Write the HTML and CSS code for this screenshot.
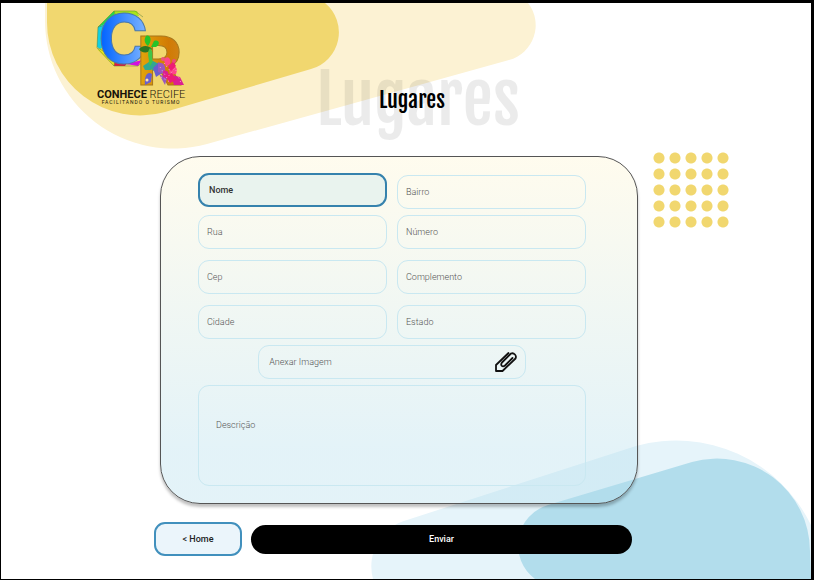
FILE: index.html
```html
<!DOCTYPE html>
<html lang="pt-BR">
<head>
<meta charset="utf-8">
<meta name="viewport" content="width=device-width, initial-scale=1">
<title>Lugares - Conhece Recife</title>
<link rel="stylesheet" href="styles.css">
</head>
<body>
<div class="page">
  <svg class="blob blob-top" width="540" height="150" viewBox="0 0 540 150" aria-hidden="true">
    <path fill="#fcf2d3" d="M44 0H527A36 36 0 0 1 508 57L206 141A128 128 0 0 1 44 17Z"/>
    <path fill="#f1d76f" d="M46 0H324A38 38 0 0 1 310 66L164 109A93 93 0 0 1 46 19Z"/>
  </svg>
  <svg class="blob blob-bottom" width="441" height="140" viewBox="370 439 441 140" aria-hidden="true">
    <path fill="#e6f4fa" d="M373 579A48 48 0 0 1 407 520L636 446A150 150 0 0 1 811 525V579Z"/>
    <path fill="#b2ddec" d="M535 579A42 42 0 0 1 548 505L692 462A93 93 0 0 1 810 551L811 579Z"/>
  </svg>

  <header class="header">
    <a class="logo" href="#" aria-label="Conhece Recife">
      <svg class="logo-mark" width="88" height="80" viewBox="0 0 88 80" aria-hidden="true">
        <defs>
          <linearGradient id="blue" x1="0" x2="1"><stop offset=".1" stop-color="#0667ff"/><stop offset="1" stop-color="#83b8ff"/></linearGradient>
          <linearGradient id="gold" x1="0" x2="1"><stop offset="0" stop-color="#e5aa0b"/><stop offset=".7" stop-color="#d17a04"/><stop offset="1" stop-color="#cf8417"/></linearGradient>
        </defs>
        <path fill="#22d84a" d="M17 1L28 4L14 12L1 17Z"/>
        <path fill="#a8e51c" d="M17 1L40 1L42 6L18 8Z"/>
        <path fill="#12cfe2" d="M1 17L8 14L5 40L0 37Z"/>
        <path fill="#e8e51c" d="M1 40L7 37L20 52L17 56Z"/>
        <path fill="#e3163f" d="M18 50L30 53L28 56L17 56Z"/>
        <path fill="#d310df" d="M29 54L45 50L41 56Z"/>
        <path fill="none" stroke="#557e35" stroke-width=".5" d="M17 1L1 17L0 38L17 56H41L49 49M17 1H38L46 7M1 17L17 13M17 1L20 9M1 38L8 42M17 56L18 49"/>
        <text class="mark-c" x="1" y="53">C</text>
        <text class="mark-r" x="40" y="75">R</text>
        <g>
          <path fill="#27c329" d="M49 26C53 24 56 30 51 36C47 33 47 29 49 26ZM57 31C62 29 64 34 59 37L54 37Z"/>
          <path fill="#2b7623" d="M42 39C46 34 53 36 55 39C51 44 44 43 42 39Z"/>
          <path fill="#42c447" d="M53 38C58 43 53 48 57 53L53 60L50 56C55 51 48 45 53 38Z"/>
          <path fill="#31a890" d="M46 56L52 52L54 60L48 60ZM56 51L62 54L57 61L52 58Z"/>
          <path fill="#6860cc" d="M48 75C47 65 51 61 55 64L54 72ZM56 58L62 52L65 63L59 67Z"/>
          <path fill="#9a57bf" d="M61 53C67 52 70 57 67 64L61 62ZM62 64L70 68L68 75Z"/>
          <path fill="#ff468b" d="M67 50C70 44 75 49 73 54L69 57ZM72 59C77 54 82 57 79 64L73 65Z"/>
          <path fill="#dc1e91" d="M66 61C71 59 73 64 71 69L66 67ZM74 65L83 67L87 75L77 75Z"/>
          <path fill="#ee1c75" d="M71 57L76 51L79 56L74 61ZM68 66L75 63L79 70L73 73Z"/>
          <path fill="none" stroke="#f6a3d4" stroke-width="1" stroke-dasharray="1 3" d="M63 57L70 68L78 58L84 73M67 53L74 62M64 67L73 72"/>
          <circle cx="50" cy="70" r="1.5" fill="#ffe4ab"/>
          <circle cx="66" cy="49" r="2" fill="#ee537f"/>
          <circle cx="77" cy="51" r="2" fill="#ed487b"/>
        </g>
      </svg>
      <span class="logo-name"><b>CONHECE</b> RECIFE</span>
      <span class="logo-tag">FACILITANDO O TURISMO</span>
    </a>
    <div class="title">
      <span class="title-ghost" aria-hidden="true">Lugares</span>
      <h1 class="title-text">Lugares</h1>
    </div>
  </header>

  <main class="main">
    <form class="form" id="lugar">
      <div class="row row-first">
        <input class="field field-active" type="text" placeholder="Nome" aria-label="Nome">
        <input class="field" type="text" placeholder="Bairro" aria-label="Bairro">
      </div>
      <div class="rows">
        <div class="row">
          <input class="field" type="text" placeholder="Rua" aria-label="Rua">
          <input class="field" type="text" placeholder="Número" aria-label="Número">
        </div>
        <div class="row">
          <input class="field" type="text" placeholder="Cep" aria-label="Cep">
          <input class="field" type="text" placeholder="Complemento" aria-label="Complemento">
        </div>
        <div class="row">
          <input class="field" type="text" placeholder="Cidade" aria-label="Cidade">
          <input class="field" type="text" placeholder="Estado" aria-label="Estado">
        </div>
      </div>
      <label class="field attach" for="imagem">
        <span>Anexar Imagem</span>
        <svg width="22" height="20" viewBox="0 0 22 20" fill="none" stroke="#111" stroke-width="1.8" stroke-linejoin="round" stroke-linecap="round" aria-hidden="true">
          <path d="M13.500 1L1 13V19H7.500L20.500 6.500C22 3.500 19 .500 16 1.500L7 10.500C5 13.500 7.500 15.500 10 13.500L17.500 6"/>
        </svg>
        <input class="attach-input" type="file" id="imagem" accept="image/*">
      </label>
      <textarea class="field description" placeholder="Descrição" aria-label="Descrição"></textarea>
    </form>
    <div class="actions">
      <button class="button button-home" type="button">&lt; Home</button>
      <button class="button button-send" type="submit" form="lugar">Enviar</button>
    </div>
    <div class="dots" aria-hidden="true"></div>
  </main>
</div>
</body>
</html>
```
FILE: styles.css
```css
* {
  box-sizing: border-box;
}

body {
  margin: 0;
  background: #fff;
  font-family: Roboto, "Liberation Sans", sans-serif;
  font-size: 9px;
}

.page {
  position: relative;
  min-height: 100vh;
  overflow: hidden;
  border: solid #000;
  border-width: 3px 3px 1px 1px;
}

.blob {
  position: absolute;
  display: block;
}

.blob-top {
  top: 0;
  left: 0;
}

.blob-bottom {
  right: 0;
  bottom: 0;
}

.header {
  position: relative;
  display: grid;
  grid-template-columns: 1fr auto 1fr;
  height: 153px;
  padding-left: 24px;
}

.logo {
  display: flex;
  flex-direction: column;
  justify-self: start;
  align-items: center;
  align-self: start;
  margin-left: 72px;
  padding-top: 7px;
  color: #17130a;
  text-decoration: none;
}

.logo-mark {
  display: block;
  overflow: visible;
}

.mark-c,
.mark-r {
  font-family: Inter, sans-serif;
  font-size: 68px;
  stroke-width: 1px;
}

.mark-c {
  fill: url(#blue);
  stroke: #4a78a8;
  font-weight: 700;
}

.mark-r {
  fill: url(#gold);
  stroke: #a8771c;
  font-weight: 800;
}

.logo-name {
  font-size: 11px;
  font-weight: 300;
  line-height: 10px;
}

.logo-name b {
  font-weight: 700;
}

.logo-tag {
  font-size: 5px;
  line-height: 5px;
  letter-spacing: 1px;
}

.title {
  display: grid;
  place-items: center;
  align-self: start;
  padding-top: 46px;
  font-family: "Fjalla One", "Roboto Condensed", "Liberation Sans Narrow", sans-serif;
  font-weight: 400;
}

.title-ghost,
.title-text {
  grid-area: 1 / 1;
}

.title-ghost {
  color: rgba(0, 0, 0, 0.08);
  font-size: 68px;
  line-height: 100px;
}

.title-text {
  margin: 0;
  padding-right: 12px;
  color: #000;
  font-size: 22px;
  font-weight: 400;
}

.main {
  position: relative;
  width: 59%;
  min-width: 484px;
  margin: 0 auto;
  left: -10px;
}

.form {
  display: flex;
  flex-direction: column;
  gap: 6px;
  margin-left: 6px;
  padding: 16px 51px 17px 37px;
  border: 1px solid #555;
  border-radius: 40px;
  background: linear-gradient(rgba(255, 238, 170, 0.2), rgba(178, 221, 236, 0.36) 85%);
  box-shadow: 0 3px 3px rgba(0, 0, 0, 0.25);
}

.rows {
  display: flex;
  flex-direction: column;
  gap: 11px;
}

.row {
  display: grid;
  grid-template-columns: 1fr 1fr;
  gap: 10px;
}

.row-first {
  height: 36px;
}

.row-first .field:last-child {
  align-self: end;
}

.field {
  min-width: 0;
  height: 34px;
  padding: 0 8px;
  border: 1px solid #c9e8f1;
  border-radius: 11px;
  background: transparent;
  color: #666;
  font: 300 9px Roboto, "Liberation Sans", sans-serif;
}

.field::placeholder {
  color: #555;
  opacity: 1;
}

.field-active {
  border: 2px solid #3582ad;
  background: #e9f3ee;
  padding: 0 9px;
  font-weight: 500;
}

.field-active::placeholder {
  color: #333;
}

.attach {
  display: flex;
  flex: none;
  align-items: center;
  justify-content: space-between;
  align-self: center;
  width: 69%;
  padding: 0 8px 0 10px;
  color: #555;
  cursor: pointer;
}

.attach-input {
  position: absolute;
  width: 1px;
  height: 1px;
  opacity: 0;
}

.description {
  display: block;
  height: 101px;
  padding: 34px 17px;
  resize: none;
}

.actions {
  display: flex;
  align-items: center;
  gap: 9px;
  margin-top: 18px;
  padding-right: 6px;
}

.button {
  border: 0;
  font: 500 9px Roboto, "Liberation Sans", sans-serif;
}

.button-home {
  width: 88px;
  height: 34px;
  border: 2px solid #4190bd;
  border-radius: 11px;
  background: #ebf5fb;
  color: #222;
}

.button-send {
  flex: 1;
  height: 29px;
  border-radius: 15px;
  background: #000;
  color: #fff;
}

.dots {
  position: absolute;
  top: -6px;
  left: 100%;
  width: 80px;
  height: 80px;
  margin-left: 13px;
  background: radial-gradient(circle, #f1d76f 5px, transparent 6px) 0 0 / 16px 16px;
}
```
